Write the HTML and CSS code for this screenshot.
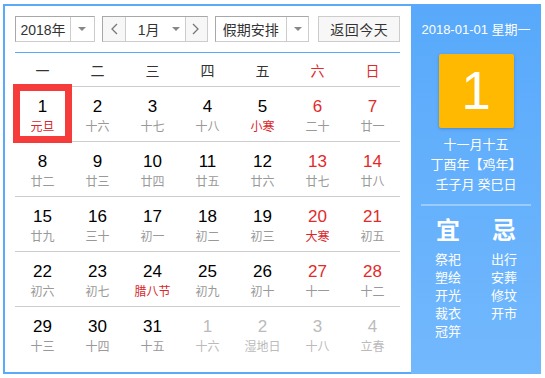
FILE: index.html
```html
<!DOCTYPE html>
<html lang="zh">
<head>
<meta charset="utf-8">
<title>日历</title>
<link rel="stylesheet" href="styles.css">
</head>
<body>
<div class="cal">
  <div class="main">
    <div class="toolbar">
      <div class="sel sel-year"><span class="sel-text">2018年</span><span class="sel-arrow"><i class="tri"></i></span></div>
      <div class="month-group">
        <span class="nav"><svg width="8" height="12" viewBox="0 0 8 12"><polyline points="7,1 2,6 7,11" fill="none" stroke="#777" stroke-width="1.3"/></svg></span>
        <span class="month"><span class="month-text">1月</span><i class="tri"></i></span>
        <span class="nav nav-r"><svg width="8" height="12" viewBox="0 0 8 12"><polyline points="1,1 6,6 1,11" fill="none" stroke="#777" stroke-width="1.3"/></svg></span>
      </div>
      <div class="sel sel-hol"><span class="sel-text">假期安排</span><span class="sel-arrow"><i class="tri"></i></span></div>
      <div class="btn">返回今天</div>
    </div>
    <div class="week">
      <span>一</span><span>二</span><span>三</span><span>四</span><span>五</span><span class="red">六</span><span class="red">日</span>
    </div>
    <div class="days">
      <div class="row">
        <div class="cell today"><b>1</b><em class="fest">元旦</em></div>
        <div class="cell"><b>2</b><em>十六</em></div>
        <div class="cell"><b>3</b><em>十七</em></div>
        <div class="cell"><b>4</b><em>十八</em></div>
        <div class="cell"><b>5</b><em class="fest">小寒</em></div>
        <div class="cell we"><b>6</b><em>二十</em></div>
        <div class="cell we"><b>7</b><em>廿一</em></div>
      </div>
      <div class="row">
        <div class="cell"><b>8</b><em>廿二</em></div>
        <div class="cell"><b>9</b><em>廿三</em></div>
        <div class="cell"><b>10</b><em>廿四</em></div>
        <div class="cell"><b>11</b><em>廿五</em></div>
        <div class="cell"><b>12</b><em>廿六</em></div>
        <div class="cell we"><b>13</b><em>廿七</em></div>
        <div class="cell we"><b>14</b><em>廿八</em></div>
      </div>
      <div class="row">
        <div class="cell"><b>15</b><em>廿九</em></div>
        <div class="cell"><b>16</b><em>三十</em></div>
        <div class="cell"><b>17</b><em>初一</em></div>
        <div class="cell"><b>18</b><em>初二</em></div>
        <div class="cell"><b>19</b><em>初三</em></div>
        <div class="cell we"><b>20</b><em class="fest">大寒</em></div>
        <div class="cell we"><b>21</b><em>初五</em></div>
      </div>
      <div class="row">
        <div class="cell"><b>22</b><em>初六</em></div>
        <div class="cell"><b>23</b><em>初七</em></div>
        <div class="cell"><b>24</b><em class="fest">腊八节</em></div>
        <div class="cell"><b>25</b><em>初九</em></div>
        <div class="cell"><b>26</b><em>初十</em></div>
        <div class="cell we"><b>27</b><em>十一</em></div>
        <div class="cell we"><b>28</b><em>十二</em></div>
      </div>
      <div class="row last">
        <div class="cell"><b>29</b><em>十三</em></div>
        <div class="cell"><b>30</b><em>十四</em></div>
        <div class="cell"><b>31</b><em>十五</em></div>
        <div class="cell other"><b>1</b><em>十六</em></div>
        <div class="cell other"><b>2</b><em>湿地日</em></div>
        <div class="cell other"><b>3</b><em>十八</em></div>
        <div class="cell other"><b>4</b><em>立春</em></div>
      </div>
    </div>
  </div>
  <div class="panel">
    <div class="p-date">2018-01-01 星期一</div>
    <div class="p-day">1</div>
    <div class="p-lunar">
      <div>十一月十五</div>
      <div>丁酉年【鸡年】</div>
      <div>壬子月 癸巳日</div>
    </div>
    <div class="p-line"></div>
    <div class="p-yiji">
      <div class="col">
        <div class="big">宜</div>
        <div>祭祀</div><div>塑绘</div><div>开光</div><div>裁衣</div><div>冠笄</div>
      </div>
      <div class="col">
        <div class="big">忌</div>
        <div>出行</div><div>安葬</div><div>修坟</div><div>开市</div>
      </div>
    </div>
  </div>
</div>
</body>
</html>
```

FILE: styles.css
```css
*, *::before, *::after { box-sizing: border-box; }
body {
  margin: 0;
  background: #fff;
  font-family: "Liberation Sans", "Noto Sans CJK SC", sans-serif;
}
.cal {
  display: flex;
  margin: 4px 0 0 3px;
  width: 538px;
  height: 370px;
  border: 2px solid #5aa9fa;
  border-right: 0;
}
.main {
  width: 406px;
  padding: 10px 11px 0 10px;
}
.toolbar {
  display: flex;
  height: 26px;
  margin-bottom: 10px;
  font-family: "Noto Sans CJK SC", sans-serif;
  font-size: 13px;
  color: #333;
}
.sel {
  display: flex;
  height: 26px;
  border: 1px solid #ccc;
  border-top-color: #a8a8a8;
  border-left-color: #a8a8a8;
  background: #fff;
}
.sel-text {
  display: flex;
  align-items: center;
  justify-content: center;
  border-right: 1px solid #ccc;
}
.sel-year { width: 80px; }
.sel-year .sel-text { width: 55px; font-family: "Liberation Sans", "Noto Sans CJK SC", sans-serif; font-size: 14px; }
.sel-hol { width: 95px; margin-left: 7px; }
.sel-hol .sel-text { width: 71px; font-size: 14px; }
.sel-arrow {
  flex: 1;
  display: flex;
  align-items: center;
  justify-content: center;
}
.tri {
  display: block;
  width: 0;
  height: 0;
  border-left: 4px solid transparent;
  border-right: 4px solid transparent;
  border-top: 4px solid #888;
}
.month-group {
  display: flex;
  height: 26px;
  margin-left: 7px;
  border: 1px solid #ccc;
  border-top-color: #a8a8a8;
  border-left-color: #a8a8a8;
}
.nav {
  width: 22px;
  display: flex;
  align-items: center;
  justify-content: center;
  background: #f7f7f7;
}
.nav-r { width: 22px; border-left: 1px solid #ccc; }
.month {
  width: 60px;
  display: flex;
  align-items: center;
  border-left: 1px solid #ccc;
  background: #fff;
  font-family: "Liberation Sans", "Noto Sans CJK SC", sans-serif;
  font-size: 14px;
}
.month-text { width: 40px; text-align: center; padding-left: 6px; }
.month .tri { margin-left: 6px; }
.btn {
  width: 82px;
  height: 26px;
  margin-left: 9px;
  display: flex;
  align-items: center;
  justify-content: center;
  border: 1px solid #ccc;
  background: #f7f7f7;
  font-size: 14px;
  letter-spacing: 0.5px;
}
.week {
  display: grid;
  grid-template-columns: repeat(7, 55px);
  height: 35px;
  border-top: 1px solid #5aa9fa;
  border-bottom: 1px solid #ccc;
  font-family: "Noto Sans CJK SC", sans-serif;
  font-size: 14px;
  color: #333;
}
.week span {
  display: flex;
  align-items: center;
  justify-content: center;
}
.red { color: #e12b2b; }
.row {
  display: grid;
  grid-template-columns: repeat(7, 55px);
  height: 55px;
  border-bottom: 1px solid #ccc;
}
.row.last { border-bottom: 0; }
.cell {
  position: relative;
  display: flex;
  flex-direction: column;
  align-items: center;
  padding-top: 10px;
}
.cell b {
  display: block;
  font-weight: normal;
  font-size: 17px;
  line-height: 20px;
  color: #000;
}
.cell em {
  display: block;
  font-style: normal;
  font-family: "Noto Sans CJK SC", sans-serif;
  font-size: 12px;
  line-height: 18px;
  color: #999;
}
.cell em.fest { color: #d9262c; }
.cell.we b { color: #e12b2b; }
.cell.other b, .cell.other em { color: #bbb; }
.cell.today::after {
  content: "";
  position: absolute;
  left: -2px;
  top: -3px;
  width: 59px;
  height: 59px;
  border: 7px solid #f63b3b;
}
.panel {
  width: 130px;
  margin-top: -2px;
  margin-bottom: -2px;
  background: linear-gradient(#58a9fb, #72b8fd);
  color: #fff;
  display: flex;
  flex-direction: column;
  align-items: center;
  font-family: "Noto Sans CJK SC", sans-serif;
  padding-top: 16px;
}
.p-date {
  font-family: "Liberation Sans", "Noto Sans CJK SC", sans-serif;
  font-size: 13px;
  line-height: 20px;
}
.p-day {
  width: 75px;
  height: 74px;
  margin-top: 14px;
  background: #ffb900;
  border-radius: 2px;
  box-shadow: 0 1px 3px rgba(0, 60, 140, 0.3);
  font-family: "Liberation Sans", sans-serif;
  font-size: 53px;
  line-height: 74px;
  text-align: center;
}
.p-lunar {
  margin-top: 6px;
  font-size: 13px;
  line-height: 20px;
  text-align: center;
}
.p-line {
  width: 110px;
  height: 2px;
  margin-top: 10px;
  background: rgba(255, 255, 255, 0.35);
}
.p-yiji {
  display: grid;
  grid-template-columns: 56px 56px;
  margin-top: 8px;
  font-size: 13px;
  line-height: 18px;
  text-align: center;
}
.big {
  font-size: 24px;
  font-weight: bold;
  line-height: 30px;
  margin-bottom: 6px;
}
```
